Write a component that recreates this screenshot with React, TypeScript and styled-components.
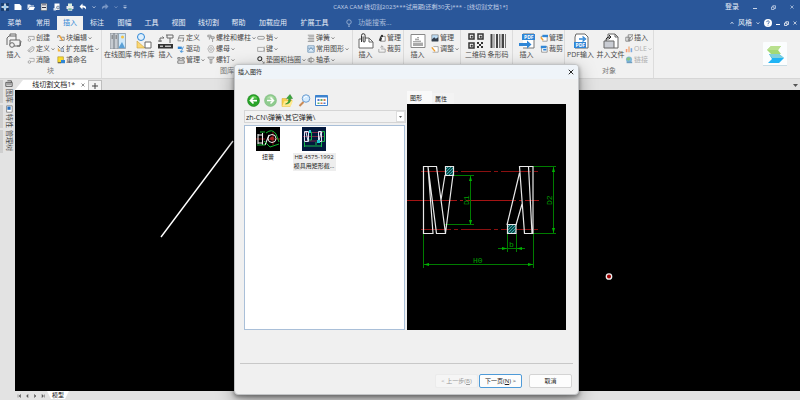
import React from "react";
import styled, { createGlobalStyle, css } from "styled-components";

const Global = createGlobalStyle`
  * { box-sizing: border-box; }
  body { margin: 0; overflow: hidden; font-family: "Open Sans", "Noto Sans CJK SC", sans-serif; font-size: 7px; line-height: 10px; color: #4a4a4a; }
  button, input { font: inherit; color: inherit; margin: 0; padding: 0; border: 0; background: none; }
  svg { display: block; flex: none; }
`;

const blue = "#2a579a";
const ink = "#666";
const sky = "#2f86d6";

/* ---------- page ---------- */
const Page = styled.div`position: relative; min-height: 100vh; display: flex; flex-direction: column; background: #e3e3e3; overflow: hidden;`;
const Header = styled.header`background: ${blue}; color: #e8eef7;`;
const TitleBar = styled.div`display: grid; grid-template-columns: 1fr auto 1fr; align-items: center; height: 14px;`;
const QuickBar = styled.div`display: flex; align-items: center; gap: 5px; padding-left: 1px;`;
const TitleText = styled.h1`margin: 0; padding-left: 41px; font-size: 6px; font-weight: 400; color: #c3d1e7; white-space: nowrap;`;
const Controls = styled.div`display: flex; align-items: center; justify-content: flex-end; gap: 14px; padding-right: 6px;`;
const ToolButton = styled.button`display: flex; align-items: center; justify-content: center; white-space: nowrap;`;
const MenuBar = styled.nav`display: flex; align-items: stretch; height: 16px; padding-top: 2px;`;
const MenuTab = styled.button<{ $w: number; $on?: boolean }>`
  flex: 0 0 ${(p) => p.$w}px; white-space: nowrap; padding-bottom: 1px;
  ${(p) => p.$on && css`background: #f1f1f1; color: ${sky};`}
`;
const Search = styled.label`display: flex; align-items: center; gap: 6px; flex: 1; padding-left: 11px; color: #a9bddb;`;
const SearchInput = styled.input`width: 60px; height: 10px; outline: 0; &::placeholder { color: #a9bddb; opacity: 1; }`;
const MenuRight = styled.div`display: flex; align-items: center; gap: 4px; padding-right: 3px;`;

/* ---------- ribbon ---------- */
const Ribbon = styled.div`display: flex; height: 48px; background: #f1f1f1;`;
const Group = styled.section<{ $w: number }>`flex: 0 0 ${(p) => p.$w}px; min-width: 0; display: flex; flex-direction: column; border-right: 1px solid #dcdcdc; padding-top: 2px;`;
const GroupBody = styled.div`display: flex; height: 34px;`;
const GroupName = styled.div`text-align: center; color: #777; line-height: 10px;`;
const BigButton = styled.button<{ $w: number }>`
  flex: 0 0 ${(p) => p.$w}px; min-width: 0; display: flex; flex-direction: column; align-items: center; gap: 1px; padding-top: 1px; align-self: flex-start; white-space: nowrap;
`;
const Column = styled.div<{ $w: number }>`flex: 0 0 ${(p) => p.$w}px; min-width: 0; display: flex; flex-direction: column;`;
const SmallButton = styled.button`
  display: flex; align-items: center; gap: 1px; height: 11px; white-space: nowrap;
  &:disabled { color: #b0b0b0; }
`;
const LogoArea = styled.div`flex: 1; display: flex; justify-content: flex-end; align-items: center; padding-right: 13px;`;

/* ---------- work area ---------- */
const Work = styled.div`flex: 1; display: flex; border-top: 1px solid #d6d6d6;`;
const Side = styled.aside`flex: 0 0 15px; display: flex; flex-direction: column; gap: 2px; padding-top: 1px;`;
const SideTab = styled.button`
  display: flex; align-items: center; gap: 1px; height: 23px; writing-mode: vertical-rl; text-orientation: sideways;
  border-left: 3px solid #cfcfcf; line-height: 11px; white-space: nowrap;
`;
const DocArea = styled.main`flex: 1; display: flex; flex-direction: column; min-width: 0;`;
const DocTabs = styled.div`display: flex; align-items: flex-end; height: 11px;`;
const DocTab = styled.div`
  display: flex; align-items: center; justify-content: flex-end; gap: 6px; width: 73px; height: 10px; padding-right: 3px; background: #fff; color: #222;
  clip-path: polygon(8px 0, 100% 0, 100% 100%, 0 100%);
`;
const PlusTab = styled.button`display: flex; align-items: center; justify-content: center; width: 14px; height: 10px; background: #f4f4f4; border: 1px solid #bdbdbd; border-bottom: 0;`;
const TabMenu = styled.button`margin-left: auto; height: 10px; padding-right: 2px;`;
const Canvas = styled.div`flex: 1; background: #000; min-height: 100px;`;
const Sheets = styled.footer`display: flex; align-items: center; height: 9px; color: #333;`;
const NavButton = styled.button`width: 8px; display: flex; justify-content: center;`;
const SheetTab = styled.button`
  width: 22px; height: 8px; background: #fff; font-size: 6px; line-height: 8px; align-self: flex-start; color: #111;
  clip-path: polygon(0 0, 100% 0, 18px 100%, 4px 100%);
`;

/* ---------- dialog ---------- */
const Dialog = styled.div`
  position: absolute; left: 234px; top: 64px; width: 345px; display: flex; flex-direction: column;
  background: #f0f0f0; border: 1px solid #c2c4c6; border-radius: 4px; color: #222;
  box-shadow: 0 2px 4px rgba(0,0,0,.4), 0 6px 18px rgba(0,0,0,.35);
`;
const DialogHead = styled.div`display: flex; align-items: center; justify-content: space-between; height: 14px; padding: 0 4px 0 3px; background: #eff4f9; border-radius: 3px 3px 0 0; font-size: 6px;`;
const DialogBody = styled.div`display: grid; grid-template-columns: 162px 1fr; padding: 12px 12px 0 9px;`;
const Files = styled.div`display: flex; flex-direction: column;`;
const FileBar = styled.div`display: flex; gap: 4px; padding: 3px 0 3px 3px; height: 19px;`;
const Combo = styled.div`display: flex; align-items: center; height: 13px; border: 1px solid #d5d5d5; background: #f2f2f2;`;
const PathInput = styled.input`flex: 1; min-width: 0; height: 11px; padding-left: 1px; outline: 0; font-size: 7px;`;
const DropButton = styled.button`display: flex; align-items: center; justify-content: center; width: 9px; height: 11px; background: #fff; border: 1px solid #ddd;`;
const FileList = styled.div`display: flex; align-items: flex-start; height: 205px; width: 161px; margin-top: 2px; padding: 1px 0; background: #fff; border: 1px solid #a9bfd8;`;
const FileItem = styled.button<{ $on?: boolean }>`
  display: flex; flex-direction: column; align-items: center; gap: 2px; width: 46px; font-size: 6px;
  & > span { width: 43px; line-height: 9px; white-space: pre-line; ${(p) => p.$on && css`background: #eee;`} }
`;
const Preview = styled.div`display: flex; flex-direction: column; padding-left: 1px;`;
const PreviewTabs = styled.div`display: flex; align-items: flex-end; height: 13px; font-size: 6px;`;
const PreviewTab = styled.button<{ $on?: boolean }>`
  width: ${(p) => (p.$on ? 25 : 22)}px; height: ${(p) => (p.$on ? 13 : 11)}px; background: ${(p) => (p.$on ? "#f9f9f9" : "#f3f3f3")}; text-align: left; padding-left: 3px;
`;
const PreviewPane = styled.div`height: 226px; background: #000;`;
const Rule = styled.hr`width: 333px; margin: 33px 0 0 5px; border: 0; border-top: 1px solid #c8c8c8;`;
const Actions = styled.div`display: flex; justify-content: flex-end; padding: 10px 6px 6px 0; font-size: 6px;`;
const ActionButton = styled.button<{ $main?: boolean }>`
  width: 43px; height: 14px; margin-left: 1px; border-radius: 2px; background: #fdfdfd; border: 1px solid ${(p) => (p.$main ? "#4f9bd8" : "#d4d4d4")};
  &:last-child { margin-left: 7px; }
  &:disabled { color: #999; background: #f5f5f5; border-color: #ebebeb; }
`;

/* ---------- glyphs ---------- */
const Svg = ({ w, h = w, box, children }: { w: number; h?: number; box: string; children: React.ReactNode }) => (
  <svg width={w} height={h} viewBox={box} fill="none" aria-hidden="true">{children}</svg>
);
const Chev = ({ c = "#777", up = false }) => (
  <Svg w={4} box="0 0 8 8"><path d={up ? "M1 6l3-4 3 4" : "M1 2.5l3 3.5 3-3.5"} stroke={c} strokeWidth="1.5" /></Svg>
);
const Cross = ({ c = "#d6e0ef", s = 5 }) => <Svg w={s} box="0 0 8 8"><path d="M1 1l6 6M7 1L1 7" stroke={c} strokeWidth="1.3" /></Svg>;
const Min = ({ c = "#c9d6ea" }) => <Svg w={4} box="0 0 4 4"><path d="M0 3.5h4" stroke={c} /></Svg>;
const Restore = ({ c = "#c9d6ea" }) => <Svg w={5} box="0 0 10 10"><path d="M1 4h5v5H1zM3.5 4V1.5H9V7H6" stroke={c} strokeWidth="1.5" /></Svg>;

const big: Record<string, React.ReactNode> = {
  block: <><path d="M4 3V1h6v6M1 12V5l2-2h7M4 12V7h10v6h-3" stroke={ink} /><circle cx="6" cy="12" r="2.3" fill="#f1f1f1" stroke={ink} /><path d="M8 13h6l1-5" stroke={ink} /></>,
  library: <><path d="M0 0h4v16H0zM4 0h4v16H4z" fill="#c6cbd1" stroke="#7c858e" strokeWidth=".7" /><path d="M1.5 3h1.5M5.5 3H7M1.5 5h1.5M5.5 5H7" stroke="#555" /><path d="M8.5.5h7v15h-7z" fill="#cfe8fa" stroke="#7b8c9c" strokeWidth=".7" /><circle cx="12.5" cy="4" r="1.5" fill="#f5c242" /><path d="M9 14l3-5 3 6H9z" fill="#5aa0d6" /></>,
  shapes: <><circle cx="5" cy="4" r="3.5" fill="#dff0fd" stroke={sky} /><path d="M1 8v7h8z" fill="#fbd774" stroke="#c9a13a" strokeWidth=".6" /><path d="M9 9h6v6H9z" fill="#fff" stroke={ink} /></>,
  crane: <><path d="M8 2h7v3h-3v5M9 2v3h3M2 5h4l-1.500-1.500M2 5v4M0 8h4" stroke={ink} /><path d="M0 11h15v4.500H0z" fill="#333" /><path d="M2 13.200h3M7 13.200h6" stroke="#fff" /></>,
  clip: <><path d="M3 6H1v9h14V9l-4-4H7" fill="#fff" stroke={ink} /><path d="M11 5v4h4" stroke={ink} /><path d="M3.5 9V2.5a1.8 1.8 0 013.6 0V8a1 1 0 01-2 0V3.5" stroke="#333" /></>,
  chart: <><path d="M1 1.5h14v13H1z" fill="#fff" stroke="#888" /><path d="M3 12h10" stroke="#555" /><path d="M4 11V8M6 11V5M8 11V4M10 11V7M12 11V9" stroke="#555" strokeDasharray="1.4 .6" /></>,
  qr: <><path d="M1 1h5v5H1zM10 1h5v5h-5zM1 10h5v5H1z" stroke="#333" strokeWidth="1.5" /><path d="M3 3h1.4v1.4H3zM12 3h1.4v1.4H12zM3 12h1.4v1.4H3z" fill="#333" stroke="#333" strokeWidth=".5" /><path d="M9 9h2v2H9zM13 9h2v2h-2zM11 11h2v2h-2zM9 13h2v2H9zM13 13h2v2h-2z" fill="#333" /></>,
  bar: <><path d="M1.5 1v14M7 1v14M13 1v14" stroke="#444" strokeWidth="2" /><path d="M4 1v14M9.5 1v14M11 1v14M15.5 1v14" stroke="#555" strokeWidth=".8" /></>,
  pdfIn: <><path d="M4 5V1h11v14H4" fill="#fff" stroke="#777" /><path d="M3 1h13v6H3z" fill={sky} /><text x="5" y="6" fontSize="5" fontWeight="700" fill="#fff">PDF</text><path d="M0 10h8V7.5l4.5 4L8 15.5V13H0z" fill={sky} /></>,
  pdfOut: <><path d="M3 1h9l3 3v11H2V4z" fill="#fff" stroke="#666" /><path d="M1 9h12v6H1z" fill={sky} /><text x="2.500" y="14" fontSize="5" fontWeight="700" fill="#fff">PDF</text><path d="M6 6h5M9.5 3.5L12.5 6 9.5 8.5" stroke={sky} strokeWidth="1.4" /></>,
  merge: <><path d="M5 7V1h7l3 3v11h-4M12 1v3h3" fill="#fff" stroke={ink} /><path d="M3 8c0-3 1-4 4-4M6 2l2 2-2 2" stroke="#222" /><path d="M1 8h10v7H1z" fill="#c9ccd3" stroke={ink} /></>,
};

const small: Record<string, React.ReactNode> = {
  create: <><path d="M2 5V3h7v4H6" stroke="#999" /><circle cx="3" cy="7.500" r="1.600" fill="#fff" stroke="#999" /></>,
  define: <path d="M1 7l5-5 3 1-1 4-4 2zM2 8l5-4" stroke="#999" />,
  hide: <><path d="M3 3h6v4H5" stroke="#aaa" /><circle cx="3" cy="7.500" r="1.600" stroke="#999" /></>,
  edit: <><path d="M1 2h3M1 2v3M5 4h4v4H3" stroke="#777" /><path d="M3 2l4 6" stroke="#f0a030" strokeWidth="1.8" /></>,
  attr: <><path d="M1 1l3 3M9 1L6 4M6 6l3 3" stroke="#555" /><path d="M1 3l4 5H1z" fill="#f0b243" /><path d="M5 4h3v4H5z" fill="#cfe0f5" stroke="#567" strokeWidth=".7" /></>,
  rename: <><path d="M1 1h7v7H1z" fill="#f9dc30" stroke="#a88b18" strokeWidth=".7" /><path d="M5 5h5v4H5z" fill={sky} /><path d="M1 8.500h4" stroke="#333" /></>,
  stack: <path d="M3 2h6M2 5h7M1 8.500h4M3 2L1 8M8 5v4H6" stroke="#777" />,
  drive: <><path d="M1 2h5v3H1z" fill={sky} /><path d="M8 2L5 9M4 7l1 2 3-1" stroke={sky} /></>,
  manage: <path d="M1 2h3v2H1zM6 2h3v2H6zM1 6h8v3H1z" stroke="#666" />,
  bolt: <path d="M1 1.5h4v2H1zM3 4v3M5 3.5h4v2H5zM7 6v4" stroke="#888" />,
  nut: <><path d="M3 1h4l2 4-2 4H3L1 5z" stroke="#aaa" /><circle cx="5" cy="5" r="1.7" stroke="#aaa" /></>,
  screw: <path d="M1 1.5h8L7 4H3zM4 4v5h2V4" stroke="#888" />,
  pin: <rect x=".7" y="3" width="8.600" height="3.5" rx="1.7" stroke="#888" />,
  key: <path d="M.8 3H7a2 2 0 010 5H.8zM9 2v7" stroke="#999" />,
  ring: <><circle cx="3.5" cy="3.5" r="2.5" stroke="#333" strokeWidth="1.3" /><path d="M6 6l3 3M7 9h2V7" stroke="#888" /></>,
  spring: <path d="M1 1.5h8M2 3.5h7M1 5.5h8M2 7.5h7M1 9.3h8" stroke="#888" />,
  figure: <><path d="M1 1h8v8H1z" fill="#dcecf9" stroke="#6d93b5" /><path d="M2 7l3-4 3 4M1 4h8" stroke="#6d93b5" /></>,
  bearing: <><ellipse cx="5" cy="5" rx="4" ry="2.3" stroke="#888" /><path d="M5 1v8M3 3v4" stroke="#888" /></>,
  person: <><path d="M3 3h6v6H3z" fill="#fff" stroke="#777" /><path d="M1 8l2-5 2 2-1 4z" fill="#333" /><circle cx="5" cy="2.5" r="1.5" fill="#333" /></>,
  crop: <path d="M1 5v4h8V5H6M5 1v5M3 3l2-2 2 2" stroke="#999" />,
  image: <><path d="M1 1h8v8H1z" fill="#bcdcf5" stroke="#666" strokeWidth=".7" /><path d="M1 7l3-3 2 2 3-2v5H1z" fill="#333e4c" /></>,
  adjust: <><path d="M3 2h6v7H2" fill="#fff" stroke="#999" /><path d="M1 3l4 5" stroke="#f0a030" strokeWidth="1.8" /></>,
  sheet: <><path d="M1 3h8v6H3" fill="#fff" stroke="#888" /><path d="M3 1h7v3H3z" fill={sky} /><path d="M1 4l3 4" stroke="#f0a030" strokeWidth="1.8" /></>,
  sheetCut: <><path d="M2 2h7v7H2z" fill="#fff" stroke="#888" /><path d="M1 1h7v3H1zM4 5h4v2H4z" fill={sky} /></>,
  obj: <path d="M4 1h6v4L8 8H4zM1 4h5v5H1zM4 8l5-6" stroke="#777" />,
  ole: <><path d="M1 5h2v4H1z" fill="#f29b76" /><path d="M4 2h2v7H4z" fill="#f3b68b" /><path d="M7 4h2v5H7z" fill="#7aa9e0" /></>,
  link: <><circle cx="5" cy="4.5" r="3.8" fill="#7fb9df" /><path d="M2 3c2-3 4-1 5 0L5 6 2 5z" fill="#8ac480" /><path d="M2 8h7" stroke="#6f9ec0" strokeWidth="2" /></>,
};

type Small = [icon: string, label: string, menu?: boolean, off?: boolean];
type Part = { big?: [string, string]; rows?: Small[]; w: number };
const groups: { w: number; name?: string; parts: Part[] }[] = [
  { w: 102, name: "块", parts: [
    { w: 27, big: ["block", "插入"] },
    { w: 30, rows: [["create", "创建"], ["define", "定义", true], ["hide", "消隐"]] },
    { w: 44, rows: [["edit", "块编辑", true], ["attr", "扩充属性", true], ["rename", "重命名"]] } ] },
  { w: 251, name: "图库", parts: [
    { w: 32, big: ["library", "在线图库"] }, { w: 20, big: ["shapes", "构件库"] }, { w: 23, big: ["crane", "插入"] },
    { w: 30, rows: [["stack", "定义"], ["drive", "驱动"], ["manage", "管理", true]] },
    { w: 50, rows: [["bolt", "螺栓和螺柱", true], ["nut", "螺母", true], ["screw", "螺钉", true]] },
    { w: 50, rows: [["pin", "销", true], ["key", "键", true], ["ring", "垫圈和挡圈", true]] },
    { w: 45, rows: [["spring", "弹簧", true], ["figure", "常用图形", true], ["bearing", "轴承", true]] } ] },
  { w: 51, parts: [{ w: 25, big: ["clip", "插入"] }, { w: 25, rows: [["person", "管理"], ["crop", "裁剪"]] }] },
  { w: 57, parts: [{ w: 27, big: ["chart", "插入"] }, { w: 29, rows: [["image", "管理"], ["adjust", "调整", true]] }] },
  { w: 52, parts: [{ w: 29, big: ["qr", "二维码"] }, { w: 16, big: ["bar", "条形码"] }] },
  { w: 52, parts: [{ w: 27, big: ["pdfIn", "插入"] }, { w: 24, rows: [["sheet", "管理"], ["sheetCut", "裁剪"]] }] },
  { w: 89, name: "对象", parts: [
    { w: 31, big: ["pdfOut", "PDF输入"] }, { w: 29, big: ["merge", "并入文件"] },
    { w: 28, rows: [["obj", "插入"], ["ole", "OLE", true, true], ["link", "链接", false, true]] } ] },
];

const tabs: [string, number][] = [["菜单", 29], ["常用", 28], ["插入", 26], ["标注", 28], ["图幅", 27], ["工具", 27], ["视图", 27], ["线切割", 33], ["帮助", 27], ["加载应用", 42], ["扩展工具", 41]];

const quick: React.ReactNode[] = [
  <Svg w={8} box="0 0 16 16"><path d="M0 0h16v16H0z" fill="#173d70" /><path d="M8 1v14M1 8h14" stroke="#fff" strokeWidth="3" /><path d="M5 5h6v6H5z" fill="#9fd0f5" /></Svg>,
  <Svg w={8} box="0 0 16 16"><path d="M1 2h10l4 4v8H1z" fill="#fff" /></Svg>,
  <Svg w={8} box="0 0 16 16"><path d="M1 13V3h5l2 2h6v2H5z" fill="#e6edf6" /><path d="M5 8h11l-3 6H2z" fill="#fff" /></Svg>,
  <Svg w={8} box="0 0 16 16"><path d="M2 1h12v14H2z" fill="#e8e8e8" stroke="#4b5563" /><path d="M4 8h8v2H4z" fill="#334" /><path d="M4 2h8v3H4z" fill="#889" /></Svg>,
  <Svg w={8} box="0 0 16 16"><path d="M3 1h10v13H3z" fill="#fff" /><circle cx="10" cy="9" r="3" fill="#b9d4ee" stroke="#445" /><path d="M1 10h5v5H1z" fill="#d6e3f2" /></Svg>,
  <Svg w={8} box="0 0 16 16"><path d="M4 1h8v5H4z" fill="#d8f0e0" /><path d="M1 6h14v6H1z" fill="#e8e8e8" /><path d="M4 10h8v5H4z" fill="#79b7a4" stroke="#fff" /></Svg>,
  <Svg w={8} box="0 0 16 16"><path d="M7 1v4c6 0 8 3 7 8-2-3-4-4-7-4v4L1 7z" fill="#fff" /></Svg>,
  <Chev c="#b9c9e2" />,
  <Svg w={8} box="0 0 16 16"><path d="M9 1v4C3 5 1 8 2 13c2-3 4-4 7-4v4l6-6z" fill="#7896c4" /></Svg>,
  <Chev c="#7896c4" />,
  <Svg w={4} box="0 0 8 8"><path d="M1 1h6M1 4h6L4 7z" stroke="#b9c9e2" fill="#b9c9e2" /></Svg>,
];
const quickNames = ["应用", "新建", "打开", "保存", "预览", "打印", "撤销", "撤销列表", "恢复", "恢复列表", "自定义"];

function SpringDrawing() {
  return (
    <svg width="100%" height="226" viewBox="407 104 159 226" preserveAspectRatio="xMinYMin meet" fill="none">
      <defs>
        <pattern id="hatch" width="3" height="3" patternUnits="userSpaceOnUse">
          <path d="M0 0h3v3H0z" fill="#0c4a4c" /><path d="M0 3L3 0" stroke="#3fb5b5" strokeWidth=".9" />
        </pattern>
      </defs>
      <g stroke="#a51414">
        <path d="M407 200.5H539" strokeDasharray="50 3 3 3" />
        <path d="M421 171.5H538M421 229.5H538" stroke="#8a1010" strokeDasharray="30 3 4 3" />
      </g>
      <g stroke="#007c00">
        <path d="M453 175.5h21M445 224.5h29M470.5 176v49M533 166.5h23M533 233.5h23M553.5 167v66M507.5 234v18M516.5 234v18M498 248.5h27M423.5 234v34M533.5 234v34M424 264.5h109" />
      </g>
      <g fill="#00b400">
        <path d="M470.5 176l1.5 5h-3zM470.5 225l1.5-5h-3zM553.5 167l1.5 5h-3zM553.5 233l1.5-5h-3zM507 248.5l-5-1.5v3zM517 248.5l5-1.5v3zM424 264.5l5-1.5v3zM533 264.5l-5-1.5v3z" />
      </g>
      <g fill="#00a000" fontFamily="Liberation Mono" fontSize="8">
        <text x="473" y="263">H0</text>
        <text x="509" y="247">b</text>
        <text transform="translate(469 205) rotate(-90)">D1</text>
        <text transform="translate(552 205) rotate(-90)">D2</text>
      </g>
      <g stroke="#e8e8e8" strokeWidth="1.2">
        <path d="M423.5 166.5H428L433 233.5H423.5zM428 166.5H436.5L445.5 233.5H436.5zM445 175L441 200M453 175L445.5 233M519.5 166.5H533V233.5H524.5zM528.5 166.5L532 233.5M519.5 173L507 225M522 204L516 225" />
        <path d="M445.5 166.5h8v9h-8zM507.5 224.5h8.5v9h-8.5z" fill="url(#hatch)" />
      </g>
    </svg>
  );
}

const Thumb = ({ selected = false }) => (
  <Svg w={24} box="0 0 24 24">
    <path d="M0 0h24v24H0z" fill={selected ? "#03183c" : "#000"} />
    {selected ? (
      <>
        <path d="M1 9.5h22M3 5.5h18M3 14h18" stroke="#b23050" strokeWidth=".7" />
        <path d="M2.5 4.5h4v10h-4zM4 5l2 9M16.5 4.5h3v10h-3zM17 14l2-9" stroke="#dde6f5" />
        <path d="M7 5h2.5v8H7M20 4.5h2.5v10H20M2.5 15v5M19.5 15v5M3 19h17M14 15v3" stroke="#17b84a" />
        <path d="M7 3h2v3H7zM15 13h3v3h-3z" fill="#21c6d0" />
      </>
    ) : (
      <>
        <path d="M0 12h9M12 12h12M17 5v13" stroke="#c22" strokeWidth=".7" />
        <path d="M2 7v10M6.5 6v12M2 8h5M2 16h5M9 18l4-10" stroke="#eee" strokeWidth="1.1" />
        <circle cx="16" cy="11.5" r="4" stroke="#eee" /><circle cx="16" cy="11.5" r="2" fill="#a22" />
        <path d="M10 6q6-5 10 1l3 8M1 18h8M8 14l6 6 9-3M4 5h5" stroke="#10b830" />
      </>
    )}
  </Svg>
);

export default function App() {
  return (
    <Page>
      <Global />
      <Header>
        <TitleBar>
          <QuickBar>{quick.map((g, i) => <ToolButton key={i} aria-label={quickNames[i]}>{g}</ToolButton>)}</QuickBar>
          <TitleText>CAXA CAM 线切割2023***试用期(还剩30天)*** - [线切割文档1*]</TitleText>
          <Controls>
            <ToolButton>登录</ToolButton>
            <ToolButton aria-label="最小化"><Min /></ToolButton>
            <ToolButton aria-label="还原"><Restore /></ToolButton>
            <ToolButton aria-label="关闭"><Cross s={4} /></ToolButton>
          </Controls>
        </TitleBar>
        <MenuBar>
          {tabs.map(([t, w]) => <MenuTab key={t} $w={w} $on={t === "插入"}>{t}</MenuTab>)}
          <Search>
            <Svg w={6} h={8} box="0 0 12 16"><circle cx="6" cy="6" r="4.5" stroke="#a9bddb" strokeWidth="1.5" /><path d="M4 12h4M4.5 15h3" stroke="#a9bddb" strokeWidth="1.5" /></Svg>
            <SearchInput placeholder="功能搜索..." aria-label="功能搜索" />
          </Search>
          <MenuRight>
            <Chev c="#d6e0ef" up />
            <ToolButton>风格</ToolButton>
            <Chev c="#d6e0ef" />
            <ToolButton aria-label="帮助">
              <Svg w={8} box="0 0 16 16"><circle cx="8" cy="8" r="8" fill="#fff" /><path d="M5.5 6.2C5.5 2.8 11 3 10.5 6.3 10.3 7.8 8 8 8 10M8 11.5V13" stroke={blue} strokeWidth="1.7" /></Svg>
            </ToolButton>
            <ToolButton aria-label="最小化文档"><Min c="#fff" /></ToolButton>
            <ToolButton aria-label="还原文档"><Restore c="#fff" /></ToolButton>
            <ToolButton aria-label="关闭文档"><Cross c="#fff" s={4} /></ToolButton>
          </MenuRight>
        </MenuBar>
      </Header>

      <Ribbon>
        {groups.map((g, gi) => (
          <Group key={gi} $w={g.w}>
            <GroupBody>
              {g.parts.map((p, pi) => p.big ? (
                <BigButton key={pi} $w={p.w}>
                  <Svg w={16} box="0 0 16 16">{big[p.big[0]]}</Svg>{p.big[1]}
                </BigButton>
              ) : (
                <Column key={pi} $w={p.w}>
                  {p.rows!.map(([icon, label, menu, off]) => (
                    <SmallButton key={label} disabled={off}>
                      <Svg w={8} box="0 0 10 10">{small[icon]}</Svg>{label}{menu && <Chev c={off ? "#bbb" : "#777"} />}
                    </SmallButton>
                  ))}
                </Column>
              ))}
            </GroupBody>
            <GroupName>{g.name}</GroupName>
          </Group>
        ))}
        <LogoArea>
          <Svg w={24} box="0 0 24 24">
            <rect width="24" height="24" rx="1" fill="#fbfdfe" /><path d="M0 23.5h24" stroke="#c9dce4" />
            <path d="M8 4h10l-3 4 3 4H8L4 8z" fill="#a3d977" /><path d="M8 4h10l-3 4H4z" fill="#b8e08e" />
            <path d="M6 12h10l5 4-5 5H5l4-4z" fill="#1fb4f5" /><path d="M6 12h10l5 4H9z" fill="#7fd0dc" />
          </Svg>
        </LogoArea>
      </Ribbon>

      <Work>
        <Side>
          <SideTab><Svg w={8} box="0 0 10 10"><path d="M1 3h8v5H1zM3 1h5v2M2 5h6" stroke="#444" /></Svg>图库</SideTab>
          <SideTab><Svg w={8} box="0 0 10 10"><path d="M2 1h7v8H2z" fill="#fff" stroke="#777" /><path d="M3 2h4v4H3z" fill="#266fc0" /></Svg>特性</SideTab>
          <SideTab>管理树</SideTab>
        </Side>
        <DocArea>
          <DocTabs>
            <DocTab>线切割文档1*<ToolButton aria-label="关闭标签"><Cross c="#555" s={4} /></ToolButton></DocTab>
            <PlusTab aria-label="新建标签"><Svg w={6} box="0 0 6 6"><path d="M3 0v6M0 3h6" stroke="#444" /></Svg></PlusTab>
            <TabMenu aria-label="标签列表"><Svg w={5} h={3} box="0 0 5 3"><path d="M0 0h5L2.5 3z" fill="#555" /></Svg></TabMenu>
          </DocTabs>
          <Canvas>
            <svg width="100%" height="300" fill="none">
              <path d="M146 147L218 51" stroke="#fff" strokeWidth="1.4" />
              <circle cx="594" cy="186.5" r="2.7" fill="#a00000" stroke="#eee" strokeWidth="1.3" />
            </svg>
          </Canvas>
          <Sheets>
            {["M2 1v6M7 1L4 4l3 3z", "M6 1L3 4l3 3z", "M3 1l3 3-3 3z", "M2 1l3 3-3 3zM7 1v6"].map((d, i) => (
              <NavButton key={d} aria-label={["首页", "上一页", "下一页", "末页"][i]}><Svg w={4} box="0 0 8 8"><path d={d} stroke="#555" fill="#555" /></Svg></NavButton>
            ))}
            <SheetTab>模型</SheetTab>
          </Sheets>
        </DocArea>
      </Work>

      <Dialog role="dialog" aria-label="插入图符">
        <DialogHead>插入图符<ToolButton aria-label="关闭对话框"><Cross c="#222" s={6} /></ToolButton></DialogHead>
        <DialogBody>
          <Files>
            <FileBar>
              <ToolButton aria-label="后退"><Svg w={13} box="0 0 26 26"><circle cx="13" cy="13" r="12" fill="#28a428" stroke="#187c18" /><path d="M5 9Q13-2 21 9z" fill="#6bd05c" /><path d="M20 13H7M13 7l-6 6 6 6" stroke="#fff" strokeWidth="3.5" /></Svg></ToolButton>
              <ToolButton aria-label="前进"><Svg w={13} box="0 0 26 26"><circle cx="13" cy="13" r="12" fill="#8fcb8f" stroke="#79b879" /><path d="M5 9Q13-2 21 9z" fill="#b2e0aa" /><path d="M6 13h13M13 7l6 6-6 6" stroke="#fff" strokeWidth="3" /></Svg></ToolButton>
              <ToolButton aria-label="上级目录"><Svg w={13} box="0 0 26 26"><path d="M2 9h8l2 3h10l-4 13H2z" fill="#f6cf4f" stroke="#d6a72c" /><path d="M7 14h17l-5 11H2z" fill="#ffe98e" /><path d="M9 20c6-2 7-7 6-11h-4l7-8 5 8h-4c1 6-2 11-10 11z" fill="#38a838" stroke="#227c22" /></Svg></ToolButton>
              <ToolButton aria-label="查找"><Svg w={13} box="0 0 26 26"><path d="M11 16L3 24" stroke="#c98a55" strokeWidth="4" /><circle cx="16" cy="9" r="7.5" fill="#d3ebff" stroke="#6b9ccf" strokeWidth="2" /><path d="M12 8q2-4 6-3" stroke="#fff" strokeWidth="2" /></Svg></ToolButton>
              <ToolButton aria-label="视图"><Svg w={13} box="0 0 26 26"><path d="M1 3h24v20H1z" fill="#fff" stroke="#3d83cf" strokeWidth="2" /><path d="M1 3h24v4H1z" fill="#3d83cf" /><path d="M5 10h4v4H5zM17 17h4v3h-4z" fill="#5577c9" /><path d="M11 10h4v4h-4zM5 17h4v3H5z" fill="#5fae6a" /><path d="M17 10h4v4h-4zM11 17h4v3h-4z" fill="#d37c50" /></Svg></ToolButton>
            </FileBar>
            <Combo>
              <PathInput defaultValue={"zh-CN\\弹簧\\其它弹簧\\"} aria-label="路径" />
              <DropButton aria-label="选择路径"><Svg w={3} h={2} box="0 0 3 2"><path d="M0 0h3L1.5 2z" fill="#555" /></Svg></DropButton>
            </Combo>
            <FileList>
              <FileItem><Thumb /><span>扭簧</span></FileItem>
              <FileItem $on><Thumb selected /><span>{"HB 4575-1992\n模具用矩形截..."}</span></FileItem>
            </FileList>
          </Files>
          <Preview>
            <PreviewTabs><PreviewTab $on>图形</PreviewTab><PreviewTab>属性</PreviewTab></PreviewTabs>
            <PreviewPane><SpringDrawing /></PreviewPane>
          </Preview>
        </DialogBody>
        <Rule />
        <Actions>
          <ActionButton disabled>&lt; 上一步(<u>B</u>)</ActionButton>
          <ActionButton $main>下一页(<u>N</u>) &gt;</ActionButton>
          <ActionButton>取消</ActionButton>
        </Actions>
      </Dialog>
    </Page>
  );
}
